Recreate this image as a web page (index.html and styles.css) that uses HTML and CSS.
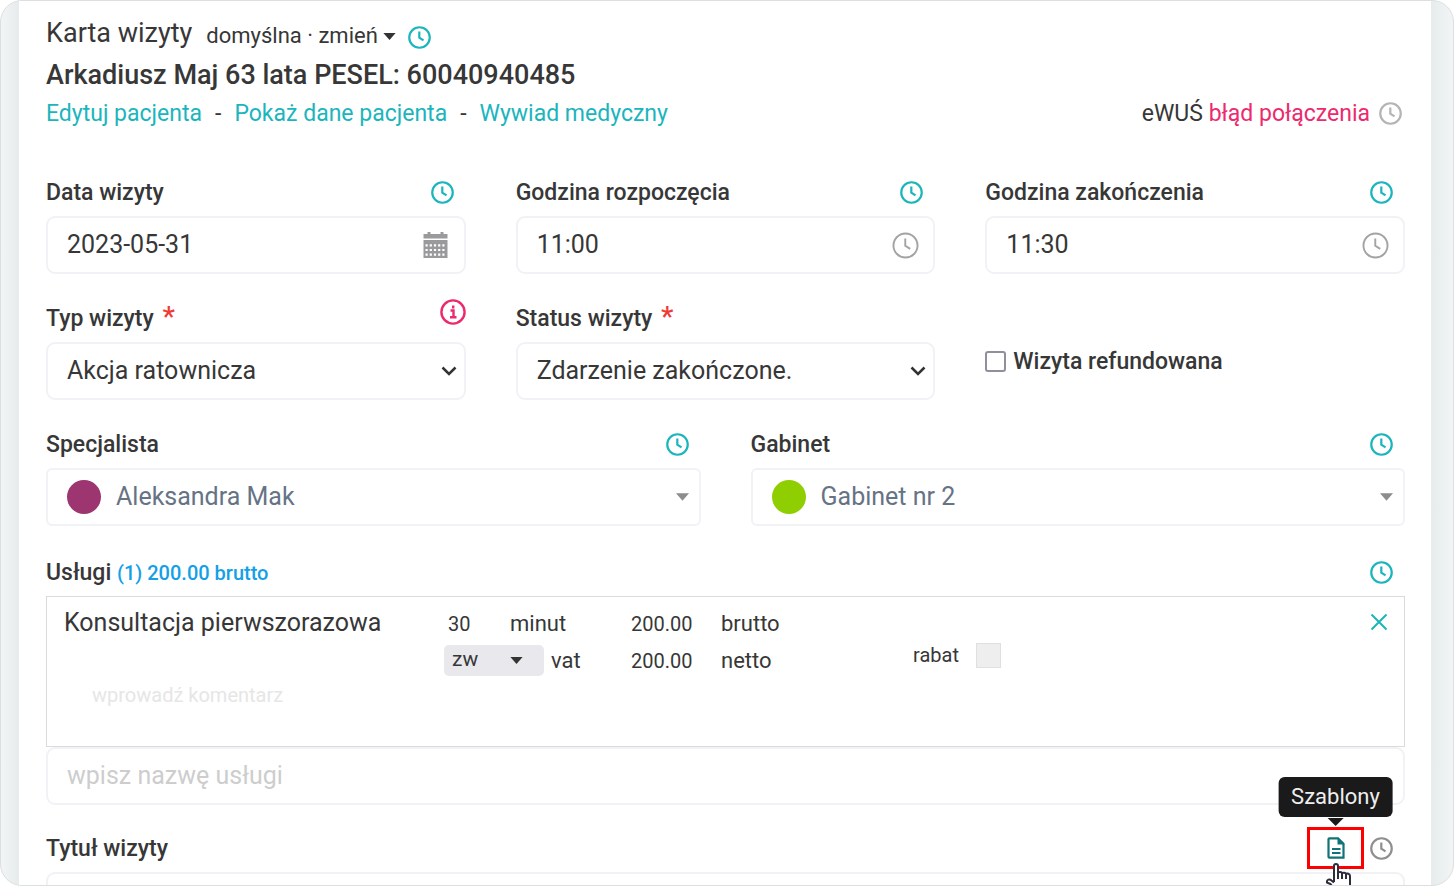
FILE: index.html
```html
<!DOCTYPE html>
<html lang="pl">
<head>
<meta charset="utf-8">
<meta name="viewport" content="width=device-width, initial-scale=1">
<title>Karta wizyty</title>
<link rel="stylesheet" href="styles.css">
</head>
<body>
<svg class="sprite" aria-hidden="true">
  <symbol id="clock" viewBox="0 0 24 24"><circle cx="12" cy="12" r="10.7"/><path d="M11.8 5.8v6.4l4.4 2.8"/></symbol>
  <symbol id="caret" viewBox="0 0 14 8"><path d="M0 0h14L7 8z"/></symbol>
  <symbol id="chevron" viewBox="0 0 16 10"><path d="M1.5 1.5L8 8l6.500-6.500"/></symbol>
</svg>
<div class="frame">
  <main class="card">
    <header class="header">
      <div class="title-row">
        <h1 class="title">Karta wizyty</h1>
        <button class="template" type="button">domyślna · zmień <svg class="caret caret-dark"><use href="#caret"/></svg></button>
        <button class="icon-btn" type="button" aria-label="Historia karty"><svg class="clock"><use href="#clock"/></svg></button>
      </div>
      <h2 class="patient">Arkadiusz Maj 63 lata PESEL: 60040940485</h2>
      <div class="links-row">
        <nav class="links">
          <a href="#">Edytuj pacjenta</a><span>-</span><a href="#">Pokaż dane pacjenta</a><span>-</span><a href="#">Wywiad medyczny</a>
        </nav>
        <div class="ewus"><span>eWUŚ <span class="error">błąd połączenia</span></span>
          <button class="icon-btn" type="button" aria-label="Historia eWUŚ"><svg class="clock clock-muted"><use href="#clock"/></svg></button>
        </div>
      </div>
    </header>

    <form class="form">
      <div class="row row-3">
        <div class="field">
          <div class="label-row"><label for="date">Data wizyty</label>
            <button class="icon-btn" type="button" aria-label="Historia daty"><svg class="clock"><use href="#clock"/></svg></button></div>
          <div class="control"><input id="date" class="input" type="text" value="2023-05-31">
            <svg class="adorn calendar" viewBox="0 0 24 26">
              <path fill="#9a9a9c" d="M0 2h4V0h3v2h10V0h3v2h4v4.500H0z M0 8h24v18H0z"/>
              <path stroke="#fff" stroke-width="2.200" stroke-dasharray="2.200 2" d="M2 13.300h20.500M2 18h20.500M2 22.700h20.500"/>
            </svg></div>
        </div>
        <div class="field">
          <div class="label-row"><label for="start">Godzina rozpoczęcia</label>
            <button class="icon-btn" type="button" aria-label="Historia rozpoczęcia"><svg class="clock"><use href="#clock"/></svg></button></div>
          <div class="control"><input id="start" class="input" type="text" value="11:00">
            <svg class="adorn clock-large"><use href="#clock"/></svg></div>
        </div>
        <div class="field">
          <div class="label-row"><label for="end">Godzina zakończenia</label>
            <button class="icon-btn" type="button" aria-label="Historia zakończenia"><svg class="clock"><use href="#clock"/></svg></button></div>
          <div class="control"><input id="end" class="input" type="text" value="11:30">
            <svg class="adorn clock-large"><use href="#clock"/></svg></div>
        </div>
      </div>

      <div class="row row-3">
        <div class="field">
          <div class="label-row label-row-flush"><label for="type">Typ wizyty <span class="required">*</span></label>
            <button class="icon-btn info-btn" type="button" aria-label="Informacja">
              <svg class="info" viewBox="0 0 26 26"><circle cx="13" cy="13" r="11.600"/><path d="M10.500 11.500h3v6.500M10 18.200h6.500M13.200 6.500v3"/></svg>
            </button></div>
          <div class="control"><select id="type" class="input"><option>Akcja ratownicza</option></select>
            <svg class="adorn chevron"><use href="#chevron"/></svg></div>
        </div>
        <div class="field">
          <div class="label-row"><label for="status">Status wizyty <span class="required">*</span></label></div>
          <div class="control"><select id="status" class="input"><option>Zdarzenie zakończone.</option></select>
            <svg class="adorn chevron"><use href="#chevron"/></svg></div>
        </div>
        <div class="check-cell"><label class="check"><input type="checkbox">Wizyta refundowana</label></div>
      </div>

      <div class="row row-2">
        <div class="field">
          <div class="label-row"><label for="doctor">Specjalista</label>
            <button class="icon-btn" type="button" aria-label="Historia specjalisty"><svg class="clock"><use href="#clock"/></svg></button></div>
          <div class="control"><select id="doctor" class="input input-dot"><option>Aleksandra Mak</option></select>
            <span class="dot dot-plum"></span><svg class="adorn caret caret-grey"><use href="#caret"/></svg></div>
        </div>
        <div class="field">
          <div class="label-row"><label for="room">Gabinet</label>
            <button class="icon-btn" type="button" aria-label="Historia gabinetu"><svg class="clock"><use href="#clock"/></svg></button></div>
          <div class="control"><select id="room" class="input input-dot"><option>Gabinet nr 2</option></select>
            <span class="dot dot-green"></span><svg class="adorn caret caret-grey"><use href="#caret"/></svg></div>
        </div>
      </div>

      <section class="field services">
        <div class="label-row"><label for="service">Usługi <span class="sum">(1) 200.00 brutto</span></label>
          <button class="icon-btn" type="button" aria-label="Historia usług"><svg class="clock"><use href="#clock"/></svg></button></div>
        <div class="service">
          <div class="service-main">
            <div class="service-name">Konsultacja pierwszorazowa</div>
            <input class="comment" type="text" placeholder="wprowadź komentarz" aria-label="Komentarz">
          </div>
          <div class="service-col">
            <div class="line"><input id="minutes" class="mini mini-minutes" type="text" value="30"><label for="minutes">minut</label></div>
            <div class="line line-vat"><span class="vat"><select id="vat"><option>zw</option></select><svg class="caret caret-dark"><use href="#caret"/></svg></span><label for="vat">vat</label></div>
          </div>
          <div class="service-col">
            <div class="line"><input id="gross" class="mini mini-price" type="text" value="200.00"><label for="gross">brutto</label></div>
            <div class="line"><input id="net" class="mini mini-price" type="text" value="200.00"><label for="net">netto</label></div>
          </div>
          <div class="discount"><label for="discount">rabat</label><input id="discount" type="text" disabled></div>
          <button class="icon-btn remove" type="button" aria-label="Usuń usługę"><svg class="cross" viewBox="0 0 18 18"><path d="M1.500 1.500l15 15M16.500 1.500l-15 15"/></svg></button>
        </div>
        <input id="service" class="input" type="text" placeholder="wpisz nazwę usługi">
      </section>

      <div class="field">
        <div class="label-row label-row-title"><label for="subject">Tytuł wizyty</label>
          <div class="actions">
            <div class="highlight">
              <span class="tooltip" role="tooltip">Szablony</span>
              <button class="icon-btn" type="button" aria-label="Szablony">
                <svg class="doc" viewBox="0 0 18 22"><path class="doc-page" d="M2.500 1.300h8.500l5.500 5.500v13.900h-14a1 1 0 0 1-1-1v-17.400a1 1 0 0 1 1-1z"/><path class="doc-fold" d="M10.500.5l7 7h-7z"/><path class="doc-lines" d="M5 12h8.500M5 16h8.500"/></svg>
              </button>
              <svg class="pointer" viewBox="0 0 26 30"><path d="M9 19V3C9 .4 13 .4 13 3V10c.5-1.500 4-1.500 4 .5 1-1.300 4-.8 4 .8 1-1.300 4-.8 4 1.700V22l-3 7H11L5.500 21 2 19.500c-.500-3 2.500-4 4.500-2L9 19.500"/><path d="M13 10v6M17 10.500V16M21 11.500V16"/></svg>
            </div>
            <button class="icon-btn" type="button" aria-label="Historia tytułu"><svg class="clock clock-dim"><use href="#clock"/></svg></button>
          </div></div>
        <input id="subject" class="input" type="text">
      </div>
    </form>
  </main>
</div>
</body>
</html>
```
FILE: styles.css
```css
* { box-sizing: border-box; }

body {
  margin: 0;
  background: #fff;
  color: #373737;
  font-family: Roboto, "Noto Sans", sans-serif;
  font-size: 23px;
}

button, input, select { font: inherit; color: inherit; }
button { border: 0; padding: 0; background: none; cursor: pointer; }
svg { display: block; fill: none; }
.sprite { position: absolute; width: 0; height: 0; }

.frame {
  height: 100vh;
  padding: 0 22px 0 18px;
  overflow: hidden;
  border: 1px solid #dcdfdf;
  border-radius: 22px;
  background:
    linear-gradient(to right, #f2f5f5, #e6ebeb) left / 18px 100% no-repeat,
    linear-gradient(to left, #f1f5f6, #e6ebeb) right / 22px 100% no-repeat;
}
.card { padding: 11px 26px 0 27px; background: #fff; }

/* Header */
.title-row { display: flex; align-items: center; height: 41px; }
.title { margin: 0 14px 0 0; font-size: 27px; font-weight: 400; line-height: 38px; }
.template { display: flex; align-items: center; gap: 5px; margin-right: 12px; padding-top: 7px; font-size: 22px; line-height: 32px; }
.title-row .icon-btn { padding-top: 10px; }
.patient { margin: 2px 0 0; font-size: 27px; font-weight: 500; line-height: 40px; }
.links-row { display: flex; justify-content: space-between; align-items: center; height: 36px; font-size: 23px; }
.links { display: flex; gap: 13px; }
.links a { color: #1bb5bd; text-decoration: none; }
.ewus { display: flex; align-items: center; gap: 9px; padding-right: 3px; }
.error { color: #ec2a6d; }

/* Icons */
.icon-btn { display: flex; flex: none; }
.clock { width: 23px; height: 23px; stroke: #1bb5bd; stroke-width: 2.300; }
.clock-muted { stroke: #b4b4b4; }
.clock-dim { stroke: #8f8f8f; }
.clock-large { width: 27px; height: 27px; stroke: #a3a3a5; stroke-width: 1.700; }
.calendar { width: 25px; height: 26px; }
.chevron { width: 16px; height: 10px; stroke: #333; stroke-width: 2.500; }
.caret { width: 13px; height: 7px; }
.caret-dark { fill: #333; }
.caret-grey { fill: #8d8d8d; height: 8px; }
.info { width: 26px; height: 26px; stroke: #ec2a6d; stroke-width: 2.400; }
.cross { width: 18px; height: 18px; stroke: #1bb5bd; stroke-width: 2; }

/* Form */
.form { display: flex; flex-direction: column; gap: 28px; padding-top: 45px; }
.row { display: grid; gap: 50px; }
.row-3 { grid-template-columns: repeat(3, 1fr); }
.row-2 { grid-template-columns: repeat(2, 1fr); }
.field { min-width: 0; }
.services { padding-top: 2px; }
.label-row {
  display: flex;
  justify-content: space-between;
  align-items: center;
  height: 32px;
  margin-bottom: 8px;
  padding-right: 12px;
  font-weight: 500;
}
.label-row-flush { padding-right: 0; }
.info-btn { padding-bottom: 12px; }
.required { margin-left: 3px; color: #f03a35; font-size: 28px; line-height: 24px; }
.sum { color: #14a0e6; font-size: 20px; }

.control { position: relative; }
.input {
  display: block;
  width: 100%;
  height: 58px;
  padding: 0 19px 1px;
  border: 2px solid #f0f2f5;
  border-radius: 9px;
  background: #fff;
  font-size: 25px;
  appearance: none;
}
.control .input { padding-right: 60px; }
.control .input-dot { padding-left: 68px; color: #667385; border-radius: 6px; }
.input::placeholder { color: #cdcdcd; opacity: 1; }
.adorn { position: absolute; top: 0; bottom: 0; right: 16px; margin: auto; pointer-events: none; }
.adorn.calendar { right: 18px; }
.adorn.chevron { right: 9px; }
.adorn.caret { right: 12px; }
.dot { position: absolute; left: 21px; top: 0; bottom: 0; width: 34px; height: 34px; margin: auto; border-radius: 50%; }
.dot-plum { background: #9c3570; }
.dot-green { background: #8fce00; }

.check-cell { display: flex; align-items: center; }
.check { display: flex; align-items: center; gap: 7px; padding-top: 20px; font-weight: 500; }
.check input { appearance: none; width: 21px; height: 21px; margin: 0; border: 2px solid #8f8f9d; border-radius: 3px; }

/* Service entry */
.service {
  display: grid;
  grid-template-columns: 380fr 187fr 282fr 457fr auto;
  min-height: 151px;
  padding: 8px 16px 0 17px;
  border: 1px solid #d9dcdc;
  font-size: 22px;
}
.service-name { font-size: 25px; line-height: 36px; }
.comment { width: 300px; margin-top: 42px; padding: 0 0 0 28px; border: 0; background: none; font-size: 20px; }
.comment::placeholder { color: #e6e6e6; opacity: 1; }
.line { display: flex; align-items: center; height: 37px; }
.line-vat { gap: 7px; }
.mini { padding: 0; border: 0; background: none; font-size: 20px; }
.mini-minutes { width: 66px; padding-left: 4px; }
.mini-price { width: 90px; }
.vat { position: relative; }
.vat select { display: block; width: 100px; height: 31px; padding: 0 30px 3px 8px; border: 0; border-radius: 5px; background: #e9e9ed; font-size: 21px; appearance: none; }
.vat .caret { position: absolute; top: 12px; right: 21px; pointer-events: none; }
.discount { display: flex; align-items: center; gap: 17px; height: 100px; font-size: 20px; }
.discount input { width: 25px; height: 25px; padding: 0; border: 1px solid #e0e0e0; background: #eee; }
.remove { align-self: start; padding-top: 8px; }

/* Visit title actions */
.label-row-title { margin-top: -1px; }
.actions { display: flex; align-items: center; gap: 6px; }
.highlight { position: relative; display: flex; align-items: center; justify-content: center; width: 57px; height: 42px; margin: -5px 0; border: 3px solid #f00; }
.doc { width: 18px; height: 22px; }
.doc-page { stroke: #0f7378; stroke-width: 2.200; }
.doc-fold { fill: #0f7378; }
.doc-lines { stroke: #0f7378; stroke-width: 1.800; }
.tooltip {
  position: absolute;
  bottom: 49px;
  left: 50%;
  padding: 0 13px;
  border-radius: 6px;
  background: #1a1a1a;
  color: #eee;
  font-size: 22px;
  font-weight: 400;
  line-height: 40px;
  transform: translateX(-50%);
}
.tooltip::after { content: ""; position: absolute; top: 41px; left: 50%; margin-left: -8px; border: 8px solid transparent; border-top-color: #1a1a1a; border-bottom: 0; }
.pointer { position: absolute; top: 33px; left: 15px; width: 26px; height: 30px; fill: #fff; stroke: #2d2d3c; stroke-width: 2; }
```
